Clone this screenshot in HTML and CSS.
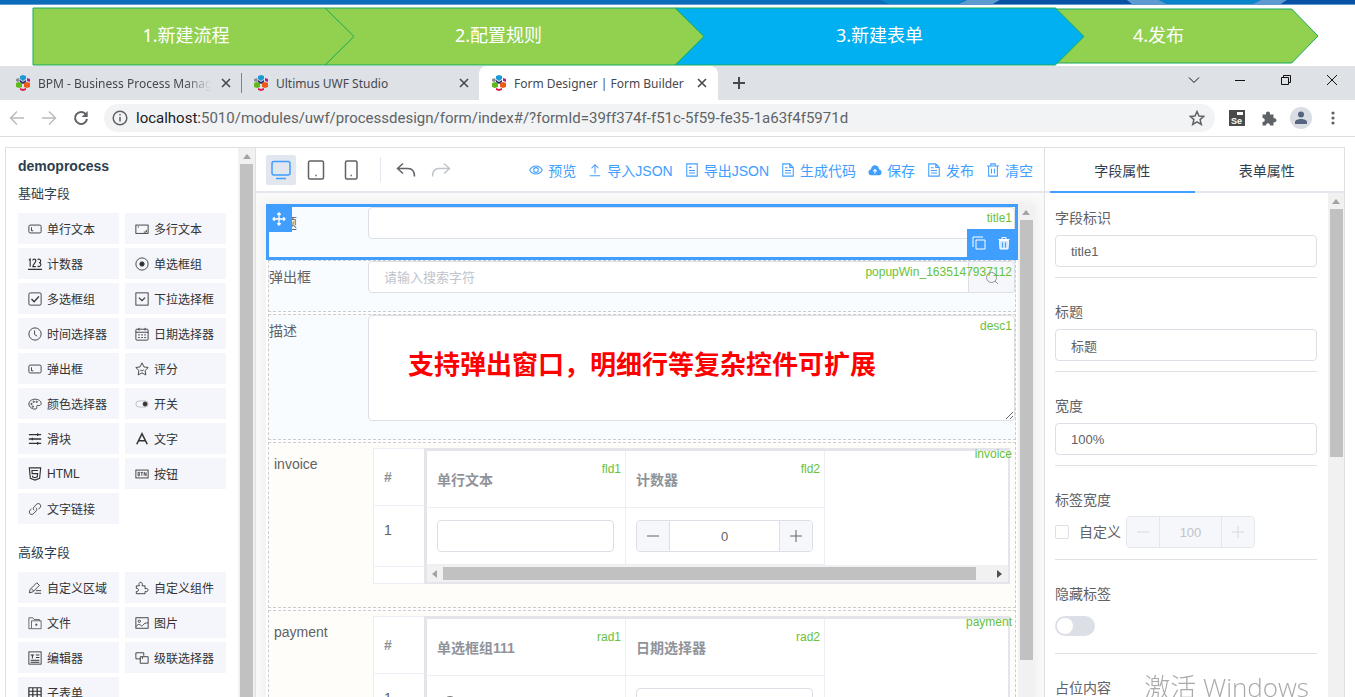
FILE: index.html
```html
<!DOCTYPE html>
<html lang="zh-CN">
<head>
<meta charset="UTF-8">
<meta name="viewport" content="width=device-width, initial-scale=1.0">
<title>Form Designer | Form Builder</title>
<link rel="stylesheet" href="styles.css">
</head>
<body>

<!-- icon sprite -->
<svg class="sprite" aria-hidden="true">
<symbol id="i-logo" viewBox="0 0 16 16"><path d="M5 1l3-1 3 1v3L8 6 5 4z" fill="#1c9ad6"/><path d="M1 4l3-1 1 3-2 1-2-1z" fill="#8a8d94"/><path d="M12 3l3 1v3l-3-1z" fill="#b0208c"/><path d="M1 8l3-1 3 1v4l-3 1-3-1z" fill="#5fb81c"/><path d="M9 8l3-1 3 1v4l-3 1-3-1z" fill="#ee5a14"/><path d="M5 13l3 1 3-1v2l-3 1-3-1z" fill="#e2184c"/><path d="M5 5l3 2 3-2v2L8 9 5 7z" fill="#2b2d6e"/></symbol>
<symbol id="i-x" viewBox="0 0 10 10"><path d="M1 1l8 8M9 1L1 9"/></symbol>
<symbol id="i-input" viewBox="0 0 16 16"><rect x="1" y="3.5" width="14" height="9" rx="1.5"/><path d="M4 6v4h2"/></symbol>
<symbol id="i-textarea" viewBox="0 0 16 16"><rect x="1" y="3.500" width="14" height="9.500"/><path d="M3.500 6V5.500h1M10 11.500h3V9"/></symbol>
<symbol id="i-number" viewBox="0 0 16 16"><path d="M1 3.500l1.500-1V11M5.500 4c0-2 3.500-2 3.500 0 0 2.500-3.500 4-3.500 7H9M11 3c1-1 3.500-.5 3.500 1.500S13 6.500 12.500 6.500c1 0 2.200.5 2.200 2.200C14.700 11 12 11.500 11 10.200M0 14.200h16" stroke-width="1.300"/></symbol>
<symbol id="i-radio" viewBox="0 0 16 16"><circle cx="8" cy="8" r="7"/><circle cx="8" cy="8" r="2.500" fill="currentColor"/></symbol>
<symbol id="i-check" viewBox="0 0 16 16"><rect x="1" y="1" width="14" height="14" rx="1.500"/><path d="M4 8l3 3 5.500-6" stroke-width="1.600"/></symbol>
<symbol id="i-select" viewBox="0 0 16 16"><rect x="1" y="1" width="14" height="14"/><path d="M4.500 6.500L8 10l3.500-3.500" stroke-width="1.400"/></symbol>
<symbol id="i-clock" viewBox="0 0 16 16"><circle cx="8" cy="8" r="7"/><path d="M7.500 4v4.500l3 2"/></symbol>
<symbol id="i-date" viewBox="0 0 16 16"><rect x="1" y="2.500" width="14" height="12.500" rx="1"/><path d="M1 6h14M4.500 1v3M11.500 1v3M3.500 9h2M7 9h2M10.500 9h2M3.500 12h2M7 12h2M10.500 12h2"/></symbol>
<symbol id="i-star" viewBox="0 0 16 16"><path d="M8 1l2.200 4.600 4.900.7-3.600 3.500.9 5L8 12.400 3.600 14.800l.9-5L.9 6.300l4.900-.7zM6 9c1 1.300 3 1.300 4 0"/></symbol>
<symbol id="i-palette" viewBox="0 0 16 16"><path d="M8 2.500c4 0 7 2 7 4.800 0 2-1.500 2.700-3.500 2.400-1.500-.2-2 .8-1.500 1.800.6 1.200-.3 2.300-2 2.300-4 0-7-2.600-7-5.800C1 5 4 2.500 8 2.500z"/><circle cx="4" cy="8" r=".8"/><circle cx="6.500" cy="5.500" r=".8"/><circle cx="10" cy="5.500" r=".8"/><circle cx="5.500" cy="11" r=".8"/></symbol>
<symbol id="i-switch" viewBox="0 0 16 16"><rect x="1" y="4.500" width="14" height="7" rx="3.500" opacity=".3"/><circle cx="11.500" cy="8" r="2.300" fill="currentColor"/></symbol>
<symbol id="i-slider" viewBox="0 0 16 16"><path d="M1 3h14M1 8h14M1 13h14M11 1.500v3M5 6.500v3M11 11.500v3" stroke-width="1.500"/></symbol>
<symbol id="i-text" viewBox="0 0 16 16"><path d="M2 14L8 2l6 12M4.200 10h7.600" stroke-width="1.800"/></symbol>
<symbol id="i-html" viewBox="0 0 16 16"><path d="M1.500 1h13l-1.200 12L8 15l-5.300-2zM11.500 4h-7l.3 3.500h6.200l-.4 3.800L8 12.200l-2.800-.9-.1-1.300" stroke-width="1.300"/></symbol>
<symbol id="i-button" viewBox="0 0 16 16"><rect x="1" y="3.500" width="14" height="9"/><path d="M3.500 6v4h1.500V6zM6.500 6.200h2.500M7.800 6.200V10M10.500 10V6l2.200 4V6" stroke-width=".9"/></symbol>
<symbol id="i-link" viewBox="0 0 16 16"><path d="M7 9.500c-1.500-1.500-1-3 0-4l2.500-2.700c1.300-1.300 3-1.300 4.200-.2 1.100 1.200 1 2.700-.1 4L12 8.300M9 6.500c1.500 1.500 1 3 0 4l-2.500 2.700c-1.300 1.300-3 1.300-4.200.2-1.100-1.200-1-2.700.1-4L4 7.700"/></symbol>
<symbol id="i-edit" viewBox="0 0 16 16"><path d="M1.500 13.500l1-4L10 2l3 3-7.500 7.500zM9 11h6M7.500 14H15M4 9l2.500 2.500"/></symbol>
<symbol id="i-puzzle" viewBox="0 0 16 16"><path d="M1.500 5.500H5C4 3 5 1.500 6.500 1.500S9 3 8 5.500h3.500V9c2-1 3.500 0 3.500 1.300S13.500 12.700 11.500 12v2.500h-10V12c2 0 2.500-.8 2.500-1.800S3.500 8.500 1.500 8.500z"/></symbol>
<symbol id="i-file" viewBox="0 0 16 16"><path d="M3.500 14.500H1V2h4.500l1.500 2H13v1.500M4 5.500h11v9H4zM9.500 8.500v3M8 10h3" opacity=".8"/></symbol>
<symbol id="i-image" viewBox="0 0 16 16"><rect x="1" y="2" width="14" height="12"/><circle cx="5" cy="6" r="1.300"/><path d="M1 12c3-3 4-3 6-1s2-4 8-3"/></symbol>
<symbol id="i-editor" viewBox="0 0 16 16"><rect x="1" y="1" width="14" height="14"/><path d="M3 4.500h4M5 4.500v4M9 4.500h4M9 7.500h4M3 10.500h10M3 12.800h10" stroke-width="1.200"/></symbol>
<symbol id="i-cascade" viewBox="0 0 16 16"><path d="M6.500 9H1V2h9v3.500M6 6.500h9v7.500H6zM8.500 9V6.500"/></symbol>
<symbol id="i-table" viewBox="0 0 16 16"><path d="M1 2h14v12H1zM1 6h14M1 10h14M5.500 2v12M10.500 2v12" stroke-width="1.400"/></symbol>
<symbol id="i-doc" viewBox="0 0 16 16"><path d="M2 1h8l4 4v10H2zM10 1v4h4M4.500 5.500h3M4.500 8.500h7M4.500 11.500h7"/></symbol>
</svg>

<svg class="topstrip" viewBox="0 0 1355 5" preserveAspectRatio="none" aria-hidden="true">
<path fill="#0a6cba" d="M0 0h1355v5H0z"/>
<path fill="#0a84ca" d="M880 0h85l-6 4h-70z"/><path fill="#5d9ad0" d="M967 0h33l-7 4h-34z"/>
<path fill="#0852a6" d="M1000 0h127l5 4H993z"/><path fill="#5d9ad0" d="M1127 0h32l8 4h-35z"/>
<path fill="#0a84ca" d="M1159 0h102l-8 4h-86z"/><path fill="#5d9ad0" d="M1261 0h26l-6 4h-28z"/>
<path fill="#0852a6" d="M1287 0h68v4h-74z"/><path fill="#5d9ad0" d="M0 4h1355v1H0z"/>
</svg>

<ol class="steps">
<li class="step step1"><svg viewBox="0 0 100 100" preserveAspectRatio="none"><path d="M0 0H91L100 50 91 100H0z"/></svg><span>1.新建流程</span></li>
<li class="step step2"><svg viewBox="0 0 100 100" preserveAspectRatio="none"><path d="M0 0H92.400L100 50 92.400 100H0z"/></svg><span>2.配置规则</span></li>
<li class="step step3 current"><svg viewBox="0 0 100 100" preserveAspectRatio="none"><path d="M0 0H93L100 50 93 100H0z"/></svg><span>3.新建表单</span></li>
<li class="step step4"><svg viewBox="0 0 100 100" preserveAspectRatio="none"><path d="M0 0H90L100 50 90 100H0z"/></svg><span>4.发布</span></li>
</ol>

<!-- browser window -->
<div class="tabbar">
<div class="tab"><svg class="fav"><use href="#i-logo"/></svg><span class="tab-title fade">BPM - Business Process Management</span><button class="tab-x" aria-label="关闭"><svg><use href="#i-x"/></svg></button></div>
<div class="tab second"><svg class="fav"><use href="#i-logo"/></svg><span class="tab-title">Ultimus UWF Studio</span><button class="tab-x" aria-label="关闭"><svg><use href="#i-x"/></svg></button></div>
<div class="tab active"><svg class="fav"><use href="#i-logo"/></svg><span class="tab-title">Form Designer | Form Builder</span><button class="tab-x" aria-label="关闭"><svg><use href="#i-x"/></svg></button></div>
<button class="newtab" aria-label="新标签页"><svg viewBox="0 0 12 12"><path d="M6 0v12M0 6h12"/></svg></button>
<div class="winctl">
<button aria-label="搜索标签页"><svg viewBox="0 0 12 12"><path d="M1 3.500l5 5 5-5"/></svg></button>
<button aria-label="最小化"><svg viewBox="0 0 12 12"><path d="M1 6.500h10"/></svg></button>
<button aria-label="还原"><svg viewBox="0 0 12 12"><path d="M1.500 3.500h7v7h-7zM3.500 3.500v-2h7v7h-2"/></svg></button>
<button aria-label="关闭窗口"><svg viewBox="0 0 12 12"><path d="M1 1l10 10M11 1L1 11"/></svg></button>
</div>
</div>

<div class="navbar">
<button aria-label="后退" class="dim"><svg viewBox="0 0 16 16"><path d="M15 8H2M8 1.500L1.500 8 8 14.500"/></svg></button>
<button aria-label="前进" class="dim"><svg viewBox="0 0 16 16"><path d="M1 8h13M8 1.500L14.500 8 8 14.500"/></svg></button>
<button aria-label="刷新"><svg viewBox="0 0 16 16"><path d="M13 4.500A6 6 0 1 0 14 9" stroke-width="2"/><path d="M14.700 1v6h-6z" fill="currentColor" stroke="none"/></svg></button>
<div class="address">
<svg viewBox="0 0 16 16"><circle cx="8" cy="8" r="6.800"/><path d="M8 7v4.500M8 4v1.600"/></svg>
<span class="url"><b>localhost:</b>5010/modules/uwf/processdesign/form/index#/?formId=39ff374f-f51c-5f59-fe35-1a63f4f5971d</span>
<svg viewBox="0 0 16 16"><path d="M8 1.500l2 4.500 4.800.4-3.700 3.200 1.200 4.900L8 11.900l-4.300 2.600 1.200-4.900L1.200 6.400 6 6z"/></svg>
</div>
<div class="ext">
<svg viewBox="0 0 16 16"><path d="M0 0h16v16H0z" fill="#4a4a4a" stroke="none"/><path d="M8 2h6v3H8z" fill="#fff" stroke="none"/><text x="2" y="14">Se</text></svg>
<svg viewBox="0 0 16 16"><path fill="#5f6368" stroke="none" d="M1.500 4.500H5c-.8-4 4.800-4 4 0h3.500V8c4 0 4 4.500 0 4.500V15.500H9c0-3-4-3-4 0H1.500V12c3 0 3-4 0-4z"/></svg>
<span class="avatar"><svg viewBox="0 0 16 16"><g fill="#56657f" stroke="none"><circle cx="8" cy="4.500" r="3"/><path d="M2 14v-2c0-4 12-4 12 0v2z"/></g></svg></span>
<svg viewBox="0 0 16 16"><g fill="#5f6368" stroke="none"><circle cx="8" cy="3" r="1.600"/><circle cx="8" cy="8" r="1.600"/><circle cx="8" cy="13" r="1.600"/></g></svg>
</div>
</div>

<div class="app">

<aside class="widgets">
<div class="widget-list">
<h1>demoprocess</h1>
<h2>基础字段</h2>
<ul>
<li><svg><use href="#i-input"/></svg>单行文本</li>
<li><svg><use href="#i-textarea"/></svg>多行文本</li>
<li><svg><use href="#i-number"/></svg>计数器</li>
<li><svg><use href="#i-radio"/></svg>单选框组</li>
<li><svg><use href="#i-check"/></svg>多选框组</li>
<li><svg><use href="#i-select"/></svg>下拉选择框</li>
<li><svg><use href="#i-clock"/></svg>时间选择器</li>
<li><svg><use href="#i-date"/></svg>日期选择器</li>
<li><svg><use href="#i-input"/></svg>弹出框</li>
<li><svg><use href="#i-star"/></svg>评分</li>
<li><svg><use href="#i-palette"/></svg>颜色选择器</li>
<li><svg><use href="#i-switch"/></svg>开关</li>
<li><svg><use href="#i-slider"/></svg>滑块</li>
<li><svg><use href="#i-text"/></svg>文字</li>
<li><svg><use href="#i-html"/></svg>HTML</li>
<li><svg><use href="#i-button"/></svg>按钮</li>
<li><svg><use href="#i-link"/></svg>文字链接</li>
</ul>
<h2>高级字段</h2>
<ul>
<li><svg><use href="#i-edit"/></svg>自定义区域</li>
<li><svg><use href="#i-puzzle"/></svg>自定义组件</li>
<li><svg><use href="#i-file"/></svg>文件</li>
<li><svg><use href="#i-image"/></svg>图片</li>
<li><svg><use href="#i-editor"/></svg>编辑器</li>
<li><svg><use href="#i-cascade"/></svg>级联选择器</li>
<li><svg><use href="#i-table"/></svg>子表单</li>
</ul>
</div>
<div class="vbar"><i class="up"></i><i class="thumb"></i></div>
</aside>

<main class="center">
<div class="toolbar">
<button class="device on" aria-label="电脑"><svg viewBox="0 0 20 20"><rect x="1" y="1.500" width="18" height="13.500" rx="2"/><path d="M5 18.500h10"/></svg></button>
<button class="device" aria-label="平板"><svg viewBox="0 0 20 20"><rect x="2.500" y="1" width="15" height="18" rx="1.500"/><path d="M9.300 15.500h1.400"/></svg></button>
<button class="device" aria-label="手机"><svg viewBox="0 0 20 20"><rect x="4.500" y="1" width="11.500" height="18" rx="1.500"/><path d="M9.500 15.500h1.400"/></svg></button>
<span class="sep"></span>
<button class="device" aria-label="撤销"><svg viewBox="0 0 20 20"><path d="M7 3.500L1.500 8.500 7 13.500M1.500 8.500H12q6.500 0 6.500 8"/></svg></button>
<button class="device off" aria-label="重做"><svg viewBox="0 0 20 20"><path d="M13 3.500l5.500 5-5.500 5M18.500 8.500H8q-6.500 0-6.500 8"/></svg></button>
<div class="actions">
<button><svg viewBox="0 0 16 16"><path d="M.8 8C4 1.800 12 1.800 15.200 8 12 14.200 4 14.200.8 8z"/><circle cx="8" cy="8" r="2.700"/></svg>预览</button>
<button><svg viewBox="0 0 16 16"><path d="M8 12V2M4 6l4-4 4 4M2 14.500h12"/></svg>导入JSON</button>
<button><svg viewBox="0 0 16 16"><path d="M2 1h12v14H2zM4.500 5h3M4.500 8.500h7M4.500 11.500h7"/></svg>导出JSON</button>
<button><svg><use href="#i-doc"/></svg>生成代码</button>
<button><svg viewBox="0 0 16 16"><path d="M3.500 14C-.5 13.500-.3 8 3.200 7.500 4 1 12 1 12.800 7.500c3.500.5 3.700 6 0 6.500z" fill="currentColor" stroke="none"/><path d="M8 12V8M6 9.500l2-2 2 2" stroke="#fff"/></svg>保存</button>
<button><svg><use href="#i-doc"/></svg>发布</button>
<button><svg viewBox="0 0 16 16"><path d="M1 3.500h14M3 3.500V15h10V3.500M5.500 3.500V1h5v2.500M6.300 6.500v5.500M9.700 6.500v5.500"/></svg>清空</button>
</div>
</div>

<div class="canvas">
<div class="sheet">
<div class="form">

<div class="item selected">
<label for="f-title">标题</label>
<input class="text" id="f-title" type="text">
<span class="tag">title1</span>
<span class="drag"><svg viewBox="0 0 14 14"><path d="M7 1v12M1 7h12M5.200 2.700L7 1l1.800 1.700M5.200 11.300L7 13l1.800-1.700M2.700 5.200L1 7l1.700 1.800M11.300 5.200L13 7l-1.700 1.800"/></svg></span>
<span class="ops">
<button aria-label="复制"><svg viewBox="0 0 14 14"><path d="M4 4h9v9H4zM1 11V1h10"/></svg></button>
<button aria-label="删除"><svg viewBox="0 0 14 14"><path d="M1.500 3.500h11M5 3V1.500h4V3"/><path d="M2.500 4.500h9l-.5 8.500H3z" fill="#cfe5ff"/><path d="M5.500 6.500v5M8.500 6.500v5" stroke="#409eff"/></svg></button>
</span>
</div>

<div class="item">
<label for="f-popup">弹出框</label>
<input class="text joined" id="f-popup" type="text" placeholder="请输入搜索字符">
<button class="append" aria-label="搜索"><svg viewBox="0 0 14 14"><circle cx="6.500" cy="6.500" r="5"/><path d="M10 10l3 3"/></svg></button>
<span class="tag">popupWin_1635147937112</span>
</div>

<div class="item">
<label for="f-desc">描述</label>
<textarea class="text" id="f-desc"></textarea>
<span class="tag">desc1</span>
<strong class="note">支持弹出窗口，明细行等复杂控件可扩展</strong>
</div>

<div class="item sub">
<span class="lbl">invoice</span>
<div class="subform">
<table class="index">
<tr class="head"><th>#</th></tr>
<tr class="row"><td>1</td></tr>
<tr class="foot"><td></td></tr>
</table>
<div class="cols">
<table>
<tr class="head"><th>单行文本<span class="tag">fld1</span></th><th>计数器<span class="tag">fld2</span></th></tr>
<tr class="row">
<td><input class="text" type="text" aria-label="单行文本"></td>
<td><div class="num"><button aria-label="减"><svg viewBox="0 0 12 12"><path d="M0 6h12"/></svg></button><input type="text" value="0" aria-label="计数器"><button aria-label="加"><svg viewBox="0 0 12 12"><path d="M0 6h12M6 0v12"/></svg></button></div></td>
</tr>
</table>
<div class="hbar"><i class="left"></i><i class="thumb"></i><i class="right"></i></div>
</div>
</div>
<span class="tag">invoice</span>
</div>

<div class="item sub">
<span class="lbl">payment</span>
<div class="subform">
<table class="index">
<tr class="head"><th>#</th></tr>
<tr class="row"><td>1</td></tr>
<tr class="foot"><td></td></tr>
</table>
<div class="cols">
<table>
<tr class="head"><th>单选框组111<span class="tag">rad1</span></th><th>日期选择器<span class="tag">rad2</span></th></tr>
<tr class="row">
<td><input class="radio" type="radio" aria-label="单选框组111"></td>
<td><input class="text" type="text" aria-label="日期选择器"></td>
</tr>
</table>
<div class="hbar"><i class="left"></i><i class="thumb"></i><i class="right"></i></div>
</div>
</div>
<span class="tag">payment</span>
</div>

</div>
<div class="vbar"><i class="up"></i><i class="thumb"></i></div>
</div>
</div>
</main>

<aside class="props">
<div class="ptabs">
<button class="on">字段属性</button>
<button>表单属性</button>
</div>
<div class="pbody">
<div class="plist">
<div class="prop"><label for="p-id">字段标识</label><input class="text" id="p-id" type="text" value="title1"></div>
<div class="prop"><label for="p-title">标题</label><input class="text" id="p-title" type="text" value="标题"></div>
<div class="prop"><label for="p-width">宽度</label><input class="text" id="p-width" type="text" value="100%"></div>
<div class="prop"><label for="p-lw">标签宽度</label>
<div class="line"><input class="cbox" id="p-custom" type="checkbox"><label for="p-custom">自定义</label>
<div class="num off"><button disabled aria-label="减"><svg viewBox="0 0 12 12"><path d="M0 6h12"/></svg></button><input id="p-lw" type="text" value="100" disabled><button disabled aria-label="加"><svg viewBox="0 0 12 12"><path d="M0 6h12M6 0v12"/></svg></button></div>
</div>
</div>
<div class="prop"><label for="p-hide">隐藏标签</label><div class="line"><input class="switch" id="p-hide" type="checkbox"></div></div>
<div class="prop"><label for="p-ph">占位内容</label><input class="text" id="p-ph" type="text"></div>
</div>
<div class="vbar"><i class="up"></i><i class="thumb"></i></div>
</div>
</aside>

</div>

<div class="watermark">激活 Windows</div>

</body>
</html>
```
FILE: styles.css
```css
* {
margin: 0;
padding: 0;
box-sizing: border-box;
}

html,body{
height: 100%;
overflow: hidden;
}

body{
display: flex;
flex-direction: column;
background: #fff;
font-family: "Liberation Sans", "Noto Sans CJK SC", sans-serif;
font-size: 14px;
color: #606266;
}

ul,ol{
list-style: none;
}

button{
border: 0;
background: none;
font: inherit;
color: inherit;
}

svg{
fill: none;
stroke: currentColor;
flex: none;
}

.sprite{
position: absolute;
width: 0;
height: 0;
}

.topstrip{
width: 100%;
height: 5px;
stroke: none;
}

/* process steps */
.steps{
display: flex;
align-items: center;
height: 61px;
padding: 1px 37px 0 33px;
font-family: "Noto Sans", "Noto Sans CJK SC", sans-serif;
font-size: 18px;
line-height: 24px;
color: #fff;
}

.step{
position: relative;
min-width: 0;
height: 57px;
display: flex;
align-items: center;
justify-content: center;
}

.step svg{
position: absolute;
left: 0;
top: 0;
width: 100%;
height: 100%;
overflow: visible;
fill: #92d050;
stroke: #12ab5c;
}

.step svg path{
vector-effect: non-scaling-stroke;
}

.step span{
position: relative;
padding-bottom: 2px;
}

.step + .step{
margin-left: -29px;
}

.step1{
flex: 321;
z-index: 4;
}

.step1 span{
margin-right: 15px;
}

.step2{
flex: 379;
z-index: 3;
}

.step2 span{
margin-right: 32px;
}

.step3{
flex: 409;
z-index: 2;
}

.step4{
flex: 263;
z-index: 1;
height: 54px;
}

.step4 span{
margin-right: 56px;
}

.current svg{
fill: #00b0f0;
}

/* browser window */
.tabbar{
display: flex;
height: 34px;
background: #dee1e6;
font-family: "Noto Sans", "Noto Sans CJK SC", sans-serif;
font-size: 12px;
color: #45494d;
}

.tab{
display: flex;
align-items: center;
width: 239px;
padding: 0 12px;
}

.tab:first-child{
width: 242px;
padding: 0 10px 0 15px;
background: linear-gradient(#808387,#808387) right center/1px 20px no-repeat;
}

.tab.second{
width: 237px;
padding-left: 11px;
padding-right: 9px;
}

.tab.active{
background: #fff;
border-radius: 8px 8px 0 0;
padding-right: 10px;
}

.fav{
width: 16px;
height: 16px;
margin-right: 7px;
stroke: none;
}

.tab-title{
flex: 1;
overflow: hidden;
white-space: nowrap;
}

.fade{
-webkit-mask-image: linear-gradient(to right,#000 85%,transparent);
mask-image: linear-gradient(to right,#000 85%,transparent);
}

.tab-x{
width: 12px;
height: 20px;
margin-left: 9px;
display: flex;
align-items: center;
justify-content: center;
}

.tab-x svg{
width: 10px;
height: 10px;
stroke-width: 1.6;
}

.newtab{
width: 42px;
display: flex;
align-items: center;
justify-content: center;
}

.newtab svg{
width: 12px;
height: 12px;
stroke-width: 2;
}

.winctl{
display: flex;
margin-left: auto;
color: #111;
}

.winctl button{
width: 46px;
height: 28px;
display: flex;
align-items: center;
justify-content: center;
}

.winctl svg{
width: 12px;
height: 12px;
}

.navbar{
display: flex;
align-items: center;
height: 37px;
padding: 0 6px 0 8px;
border-bottom: 1px solid #dcdee1;
color: #5f6368;
}

.navbar button{
width: 32px;
display: flex;
align-items: center;
padding-left: 1px;
}

.navbar svg{
width: 16px;
height: 16px;
stroke-width: 1.5;
}

.navbar .dim{
color: #b9bbbe;
}

.address{
flex: 1;
height: 28px;
display: flex;
align-items: center;
gap: 8px;
padding: 0 10px 0 8px;
border-radius: 14px;
background: #f1f3f4;
font-family: Roboto, sans-serif;
font-size: 15px;
}

.url{
flex: 1;
overflow: hidden;
white-space: nowrap;
}

.url b{
font-weight: 400;
color: #202124;
}

.ext{
display: grid;
grid-template-columns: repeat(4,32px);
place-items: center;
margin-left: 6px;
}

.ext text{
fill: #fff;
stroke: none;
font: bold 9px "Liberation Sans", sans-serif;
}

.avatar{
display: flex;
align-items: center;
justify-content: center;
width: 22px;
height: 22px;
border-radius: 50%;
background: #dadde4;
}

/* form designer */
.app{
flex: 1;
min-height: 0;
display: flex;
margin: 10px 10px 0 5px;
border: 1px solid #e0e0e0;
border-bottom: 0;
}

.vbar{
width: 16px;
flex: none;
display: flex;
flex-direction: column;
align-items: center;
background: #f1f1f1;
}

.vbar .up{
border: 4px solid transparent;
border-top: 0;
border-bottom: 5px solid #a3a3a3;
margin: 6px 0 5px;
}

.vbar .thumb{
width: 13px;
flex: 1;
background: #c1c1c1;
}

.widgets{
width: 250px;
flex: none;
display: flex;
border-right: 1px solid #e0e0e0;
}

.widgets .vbar{
width: 17px;
}

.widget-list{
flex: 1;
padding: 8px 12px 0;
overflow: hidden;
}

.widgets h1{
font-size: 14px;
line-height: 20px;
color: #2c3e50;
}

.widgets h2{
font-size: 13px;
font-weight: 400;
line-height: 20px;
color: #2c3e50;
margin: 8px 0 9px;
}

.widgets ul{
display: grid;
grid-template-columns: 1fr 1fr;
gap: 4px 6px;
margin-bottom: 19px;
}

.widgets li{
height: 31px;
display: flex;
align-items: center;
gap: 5px;
padding-left: 10px;
background: #f4f6fc;
font-size: 12px;
color: #333;
white-space: nowrap;
}

.widgets li svg{
width: 14px;
height: 14px;
}

.center{
flex: 1;
min-width: 0;
display: flex;
flex-direction: column;
}

.toolbar{
display: flex;
align-items: center;
height: 45px;
padding: 0 11px 0 10px;
border-bottom: 2px solid #e4e7ed;
}

.device{
width: 30px;
height: 30px;
margin-right: 5px;
display: flex;
align-items: center;
justify-content: center;
border-radius: 2px;
}

.device svg{
width: 20px;
height: 20px;
stroke-width: 1.5;
}

.device.on{
background: #e2e6ee;
color: #409eff;
}

.device.off{
color: #c0c4cc;
}

.sep{
width: 1px;
height: 25px;
margin: 0 10px 0 9px;
background: #e4e7ed;
}

.actions{
display: flex;
gap: 12px;
margin-left: auto;
color: #409eff;
}

.actions button{
display: flex;
align-items: center;
gap: 5px;
white-space: nowrap;
}

.actions svg{
width: 14px;
height: 14px;
stroke-width: 1.2;
}

.canvas{
flex: 1;
min-height: 0;
display: flex;
padding: 11px 10px 0;
background: #fafafa;
}

.sheet{
flex: 1;
min-width: 0;
display: flex;
background: #fff;
box-shadow: 0 0 10px 2px #eee;
}

.sheet .vbar,
.pbody .vbar{
display: block;
}

.sheet .vbar .up,
.pbody .vbar .up{
display: block;
width: 0;
margin: 6px auto 5px;
}

.sheet .vbar .thumb{
display: block;
height: 440px;
margin: 0 auto;
}

.pbody .vbar .thumb{
display: block;
height: 248px;
margin: 0 auto;
}

.form{
flex: 1;
min-width: 0;
display: flex;
flex-direction: column;
gap: 2px;
padding: 2px;
overflow: hidden;
}

.item{
position: relative;
flex: none;
display: flex;
align-items: flex-start;
padding-bottom: 18px;
border: 1px dashed #ccc;
background: #f8fcff;
}

.item label,
.lbl{
width: 99px;
flex: none;
line-height: 32px;
}

.item.sub{
padding: 5px 5px 23px;
background: #fffdf9;
}

.item.selected{
border: 1px solid #409eff;
outline: 2px solid #409eff;
z-index: 1;
}

.text{
flex: 1;
width: 100%;
min-width: 0;
height: 32px;
padding: 0 15px;
border: 1px solid #dcdfe6;
border-radius: 4px;
background: #fff;
font: 13px "Liberation Sans", "Noto Sans CJK SC", sans-serif;
color: #606266;
}

.text::placeholder{
color: #c0c4cc;
}

textarea.text{
height: 106px;
}

.joined{
border-radius: 4px 0 0 4px;
}

.append{
width: 46px;
height: 32px;
border: 1px solid #dcdfe6;
border-left: 0;
border-radius: 0 4px 4px 0;
background: #f5f7fa;
color: #909399;
}

.append svg{
width: 14px;
height: 14px;
vertical-align: middle;
}

.tag{
position: absolute;
top: 3px;
right: 3px;
font-size: 12px;
font-weight: 400;
line-height: 16px;
color: #67c23a;
}

.drag{
position: absolute;
left: -1px;
top: -1px;
width: 24px;
height: 26px;
display: flex;
align-items: center;
justify-content: center;
padding-right: 2px;
background: #409eff;
color: #fff;
}

.drag svg{
width: 14px;
height: 14px;
stroke-width: 1.3;
}

.ops{
position: absolute;
right: -1px;
bottom: 0;
width: 49px;
height: 28px;
display: flex;
align-items: center;
justify-content: space-around;
background: #409eff;
color: #fff;
}

.ops svg{
display: block;
width: 14px;
height: 14px;
}

.note{
position: absolute;
left: 139px;
top: 32px;
font-size: 26px;
line-height: 36px;
color: #f00;
white-space: nowrap;
}

.subform{
flex: 1;
min-width: 0;
display: flex;
height: 136px;
background: #fff;
}

.subform table{
border-collapse: separate;
border-spacing: 0;
text-align: left;
}

.subform th{
color: #909399;
}

.index{
width: 51px;
height: 136px;
border: 1px solid #ebeef5;
border-right: 0;
}

.index th,
.index td{
padding-left: 10px;
}

.index .head th{
height: 57px;
border-bottom: 1px solid #ebeef5;
}

.index .row td{
height: 61px;
border-bottom: 1px solid #ebeef5;
padding-bottom: 12px;
}

.cols{
flex: 1;
min-width: 0;
display: flex;
flex-direction: column;
border: 2px solid #e3e5ea;
border-width: 3px 2px 2px 3px;
}

.cols table{
width: 398px;
table-layout: fixed;
}

.cols th,
.cols td{
position: relative;
height: 57px;
padding: 0 11px 0 10px;
border-right: 1px solid #ebeef5;
border-bottom: 1px solid #ebeef5;
}

.cols th .tag{
top: 10px;
right: 4px;
}

.cols td .text,
.cols td .num{
display: flex;
}

.radio{
width: 14px;
height: 14px;
margin-left: 6px;
}

.hbar{
display: flex;
align-items: center;
height: 17px;
background: #f1f1f1;
}

.hbar .left,
.hbar .right{
border: 4px solid transparent;
}

.hbar .left{
border-left: 0;
border-right: 5px solid #a3a3a3;
margin: 0 6px 0 5px;
}

.hbar .right{
border-right: 0;
border-left: 5px solid #505050;
margin: 0 6px 0 21px;
}

.hbar .thumb{
flex: 1;
height: 13px;
background: #c1c1c1;
}

.num{
display: flex;
height: 32px;
border: 1px solid #dcdfe6;
border-radius: 4px;
overflow: hidden;
}

.num button{
width: 32px;
flex: none;
display: flex;
align-items: center;
justify-content: center;
background: #f5f7fa;
}

.num svg{
width: 12px;
height: 12px;
}

.num input{
flex: 1;
min-width: 0;
border: 0;
border-left: 1px solid #dcdfe6;
border-right: 1px solid #dcdfe6;
text-align: center;
font: 13px "Liberation Sans", sans-serif;
color: #606266;
}

.num.off{
width: 129px;
border-color: #e4e7ed;
color: #d5d8de;
}

.num.off input{
background: #f5f7fa;
border-color: #e4e7ed;
color: #c0c4cc;
}

/* property panel */
.props{
width: 300px;
flex: none;
display: flex;
flex-direction: column;
border-left: 1px solid #e0e0e0;
}

.ptabs{
display: flex;
flex: none;
height: 45px;
padding: 0 5px;
border-bottom: 2px solid #e4e7ed;
}

.ptabs button{
flex: 1;
height: 45px;
color: #303f50;
border-bottom: 2px solid transparent;
}

.ptabs .on{
border-bottom-color: #409eff;
}

.pbody{
flex: 1;
min-height: 0;
display: flex;
}

.plist{
flex: 1;
overflow: hidden;
padding: 9px 11px 0 10px;
}

.prop{
height: 76px;
margin-bottom: 18px;
border-bottom: 1px solid #dfe1e5;
}

.prop > label{
display: block;
line-height: 33px;
}

.line{
display: flex;
align-items: center;
height: 30px;
gap: 5px;
line-height: 20px;
}

.cbox{
appearance: none;
width: 14px;
height: 14px;
margin-right: 5px;
border: 1px solid #dcdfe6;
border-radius: 2px;
background: #fff;
}

.switch{
appearance: none;
width: 40px;
height: 20px;
border-radius: 10px;
background: #dcdfe6;
}

.switch::before{
content: "";
display: block;
width: 16px;
height: 16px;
margin: 2px;
border-radius: 50%;
background: #fff;
}

.watermark{
position: fixed;
right: 46px;
bottom: -8px;
font-family: "Open Sans", "Noto Sans CJK SC", sans-serif;
font-size: 26px;
font-weight: 300;
line-height: 36px;
color: #aaa;
z-index: 5;
}
```
